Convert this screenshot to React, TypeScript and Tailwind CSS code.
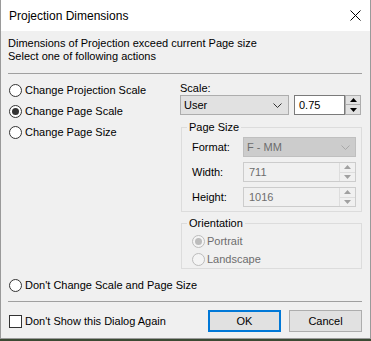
import React from "react";

const font = { fontFamily: '"Segoe UI", "Liberation Sans", Arial, sans-serif' };

const Radio = ({ checked = false, disabled = false }: { checked?: boolean; disabled?: boolean }) => (
  <span
    className={`w-[13px] h-[13px] rounded-full border flex items-center justify-center shrink-0 ${
      disabled ? "border-[#bcbcbc] bg-[#f4f4f4]" : "border-[#333333] bg-white"
    }`}
  >
    {checked && (
      <span className={`w-[7px] h-[7px] rounded-full ${disabled ? "bg-[#bcbcbc]" : "bg-[#333333]"}`} />
    )}
  </span>
);

const Chevron = ({ color }: { color: string }) => (
  <svg width="9" height="5" viewBox="0 0 9 5" className="shrink-0">
    <path d="M0.5 0.5 L4.5 4.5 L8.5 0.5" fill="none" stroke={color} strokeWidth="1" />
  </svg>
);

const Arrow = ({ up, color }: { up: boolean; color: string }) => (
  <svg width="7" height="4" viewBox="0 0 7 4">
    <path d={up ? "M0 4 L3.5 0 L7 4 Z" : "M0 0 L3.5 4 L7 0 Z"} fill={color} />
  </svg>
);

const DisabledSpin = ({ value }: { value: string }) => (
  <div className="w-[113px] h-[20px] border border-[#cccccc] bg-[#f0f0f0] flex">
    <span className="flex-1 pl-[5px] text-[#6d6d6d] leading-[18px]">{value}</span>
    <div className="w-[16px] border-l border-[#dddddd] flex flex-col">
      <div className="flex-1 flex items-center justify-center border-b border-[#dddddd]">
        <Arrow up color="#a0a0a0" />
      </div>
      <div className="flex-1 flex items-center justify-center">
        <Arrow up={false} color="#a0a0a0" />
      </div>
    </div>
  </div>
);

const GroupBox = ({ title, className, children }: { title: string; className: string; children: React.ReactNode }) => (
  <div className={`relative border border-[#dcdcdc] ${className}`}>
    <span className="absolute -top-[8px] left-[5px] px-[2px] bg-[#f0f0f0] leading-[14px]">{title}</span>
    {children}
  </div>
);

export default function App() {
  return (
    <div className="w-[371px] h-[341px] bg-[#3b4a33] text-[11px] text-black" style={font}>
      <div className="h-[339px] border-x border-b border-[#9a9a9a] bg-[#f0f0f0] flex flex-col">
        {/* title bar */}
        <div className="h-[31px] bg-white flex items-center justify-between pl-[8px] pr-[9px]">
          <span className="text-[12px]">Projection Dimensions</span>
          <svg width="11" height="11" viewBox="0 0 11 11">
            <path d="M0.5 0.5 L10.5 10.5 M10.5 0.5 L0.5 10.5" stroke="#000" strokeWidth="1" />
          </svg>
        </div>

        <div className="px-[7px] flex flex-col">
          <div className="pt-[6px] leading-[13px]">
            <div>Dimensions of Projection exceed current Page size</div>
            <div>Select one of following actions</div>
          </div>
          <div className="mt-[10px] h-px bg-[#a0a0a0] mr-[1px]" />

          <div className="flex">
            {/* actions */}
            <div className="w-[172px] pt-[6px] flex flex-col">
              {["Change Projection Scale", "Change Page Scale", "Change Page Size"].map((t, i) => (
                <label key={t} className="h-[21px] flex items-center gap-[3px] pl-[1px]">
                  <Radio checked={i === 1} />
                  <span>{t}</span>
                </label>
              ))}
            </div>

            {/* settings */}
            <div className="flex-1 pt-[7px] pr-[1px]">
              <div className="leading-[14px]">Scale:</div>
              <div className="flex items-center h-[20px]">
                <div className="w-[109px] h-[20px] border border-[#adadad] bg-[#e1e1e1] flex items-center justify-between pl-[3px] pr-[6px]">
                  <span>User</span>
                  <Chevron color="#333333" />
                </div>
                <div className="ml-[5px] w-[51px] h-[20px] border border-[#7a7a7a] bg-white pl-[4px] leading-[18px]">
                  0.75
                </div>
                <div className="w-[16px] h-[20px] flex flex-col">
                  <div className="h-[10px] border border-[#adadad] bg-[#e1e1e1] flex items-center justify-center">
                    <Arrow up color="#000" />
                  </div>
                  <div className="h-[10px] border border-t-0 border-[#adadad] bg-[#e1e1e1] flex items-center justify-center">
                    <Arrow up={false} color="#000" />
                  </div>
                </div>
              </div>

              <GroupBox title="Page Size" className="mt-[12px] ml-[1px] pl-[10px] pr-[4px] pt-[9px] pb-[4px]">
                <div className="flex items-center h-[20px]">
                  <span className="w-[51px]">Format:</span>
                  <div className="w-[113px] h-[20px] border border-[#bfbfbf] bg-[#cccccc] flex items-center justify-between pl-[3px] pr-[5px]">
                    <span className="text-[#6d6d6d]">F - MM</span>
                    <Chevron color="#a8a8a8" />
                  </div>
                </div>
                <div className="flex items-center h-[20px] mt-[5px]">
                  <span className="w-[51px]">Width:</span>
                  <DisabledSpin value="711" />
                </div>
                <div className="flex items-center h-[20px] mt-[5px]">
                  <span className="w-[51px]">Height:</span>
                  <DisabledSpin value="1016" />
                </div>
              </GroupBox>

              <GroupBox title="Orientation" className="mt-[11px] ml-[1px] pl-[10px] pt-[8px]">
                <label className="h-[18px] flex items-center gap-[2px]">
                  <Radio checked disabled />
                  <span className="text-[#6d6d6d]">Portrait</span>
                </label>
                <label className="h-[18px] flex items-center gap-[2px]">
                  <Radio disabled />
                  <span className="text-[#6d6d6d]">Landscape</span>
                </label>
              </GroupBox>
            </div>
          </div>

          <label className="mt-[6px] h-[21px] flex items-center gap-[3px] pl-[1px]">
            <Radio />
            <span>Don't Change Scale and Page Size</span>
          </label>
          <div className="mt-[5px] h-px bg-[#a0a0a0] mr-[1px]" />

          <div className="mt-[8px] flex items-center">
            <label className="flex-1 flex items-center gap-[3px] pl-[1px]">
              <span className="w-[13px] h-[13px] border border-[#333333] bg-white" />
              <span>Don't Show this Dialog Again</span>
            </label>
            <button className="w-[73px] h-[22px] border-2 border-[#0078d7] bg-[#e1e1e1]">OK</button>
            <button className="ml-[8px] w-[73px] h-[22px] border border-[#adadad] bg-[#e1e1e1] mr-[1px]">
              Cancel
            </button>
          </div>
        </div>
      </div>
    </div>
  );
}
